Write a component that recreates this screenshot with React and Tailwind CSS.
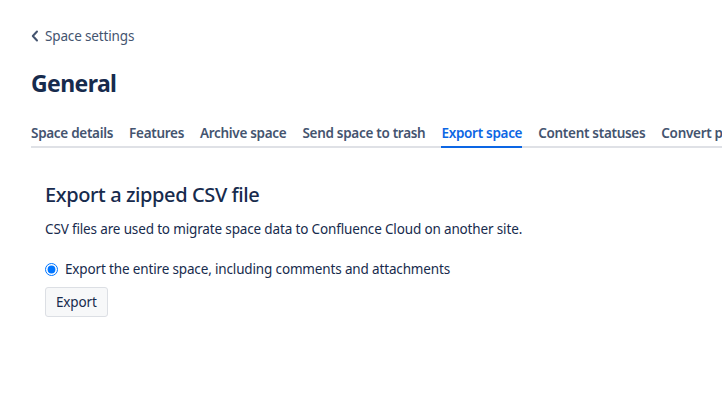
import React from 'react';

const tabs = [
  'Space details',
  'Features',
  'Archive space',
  'Send space to trash',
  'Export space',
  'Content statuses',
  'Convert p',
];

const App = () => {
  const active = 'Export space';

  return (
    <div className="w-[722px] h-[405px] overflow-hidden bg-white text-[#172b4d] font-['Noto_Sans','Open_Sans',sans-serif]">
      <div className="pl-[31px] pt-[26px]">
        {/* back link */}
        <a className="flex items-center gap-[4px] h-[20px] text-[13.5px] tracking-[-0.15px] text-[#44546f]">
          <svg width="10" height="12" viewBox="0 0 10 12" className="ml-[-1px]">
            <path d="M7 1.5 L2.8 6 L7 10.5" fill="none" stroke="#44546f" strokeWidth="2" strokeLinecap="round" strokeLinejoin="round" />
          </svg>
          <span className="ml-[1px]">Space settings</span>
        </a>

        <h1 className="mt-[21px] text-[23px] leading-[32px] font-bold text-[#172b4d] tracking-[-0.6px]">General</h1>

        {/* tabs */}
        <div className="mt-[24px] flex gap-[16px] border-b-2 border-[#dfe1e6] whitespace-nowrap">
          {tabs.map((t) => (
            <div
              key={t}
              className={`relative pb-[3px] text-[13.5px] tracking-[-0.3px] leading-[20px] font-semibold ${t === active ? 'text-[#0c66e4]' : 'text-[#44546f]'}`}
            >
              {t}
              {t === active && <div className="absolute left-0 right-0 bottom-[-2px] h-[2px] bg-[#0c66e4]" />}
            </div>
          ))}
        </div>

        <div className="pl-[14px] pt-[34px] text-[13.5px] tracking-[-0.15px]">
          <h2 className="text-[20px] leading-[26px] font-medium tracking-[-0.4px] text-[#172b4d]">Export a zipped CSV file</h2>
          <p className="mt-[11px] leading-[20px]">
            CSV files are used to migrate space data to Confluence Cloud on another site.
          </p>

          <label className="mt-[20px] flex items-center gap-[7px] leading-[20px]">
            <input type="radio" defaultChecked className="m-0 w-[13px] h-[13px]" />
            <span>Export the entire space, including comments and attachments</span>
          </label>

          <button className="mt-[8px] h-[30px] px-[10px] rounded-[3px] border border-[#dcdfe4] bg-[#f7f8f9] text-[#172b4d]">
            Export
          </button>
        </div>
      </div>
    </div>
  );
};

export default App;
